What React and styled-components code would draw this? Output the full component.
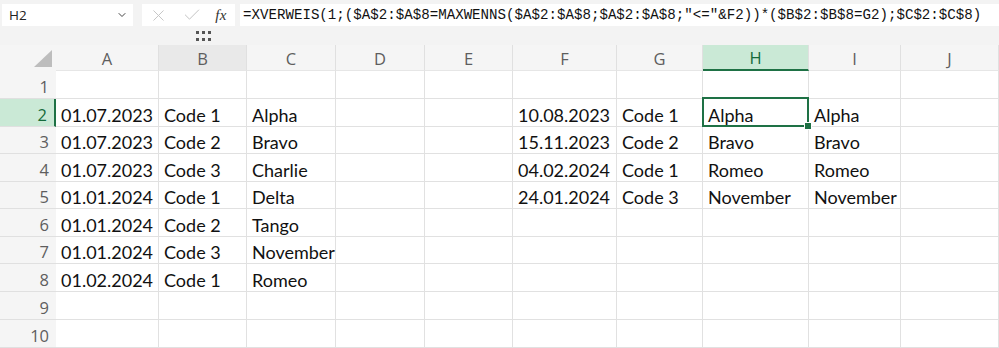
import styled, { createGlobalStyle } from "styled-components";
import { ChevronDown, X, Check } from "lucide-react";

const GlobalStyle = createGlobalStyle`
  body {
    margin: 0;
    background: #ffffff;
  }
`;

const COLS = ["A", "B", "C", "D", "E", "F", "G", "H", "I", "J"];
const ROW_HEIGHTS = [28, 28, 27, 28, 27, 28, 27, 28, 28, 28];

const DATA = {
  2: { A: "01.07.2023", B: "Code 1", C: "Alpha", F: "10.08.2023", G: "Code 1", H: "Alpha", I: "Alpha" },
  3: { A: "01.07.2023", B: "Code 2", C: "Bravo", F: "15.11.2023", G: "Code 2", H: "Bravo", I: "Bravo" },
  4: { A: "01.07.2023", B: "Code 3", C: "Charlie", F: "04.02.2024", G: "Code 1", H: "Romeo", I: "Romeo" },
  5: { A: "01.01.2024", B: "Code 1", C: "Delta", F: "24.01.2024", G: "Code 3", H: "November", I: "November" },
  6: { A: "01.01.2024", B: "Code 2", C: "Tango" },
  7: { A: "01.01.2024", B: "Code 3", C: "November" },
  8: { A: "01.02.2024", B: "Code 1", C: "Romeo" },
};

const FORMULA =
  '=XVERWEIS(1;($A$2:$A$8=MAXWENNS($A$2:$A$8;$A$2:$A$8;"<="&F2))*($B$2:$B$8=G2);$C$2:$C$8)';

function App() {
  return (
    <Page>
      <GlobalStyle />
      <TopBar>
        <NameBox>
          <span>H2</span>
          <ChevronDown size={12} color="#444" strokeWidth={2} />
        </NameBox>
        <FxBox>
          <X size={19} color="#c4c4c4" strokeWidth={1.2} />
          <Check size={20} color="#c4c4c4" strokeWidth={1.2} />
          <FxLabel>fx</FxLabel>
        </FxBox>
        <FormulaBox>{FORMULA}</FormulaBox>
      </TopBar>
      <GripRow>
        <svg width="15" height="10" viewBox="0 0 15 10">
          {[0, 6, 12].map((x) =>
            [0, 7].map((y) => (
              <rect key={x + "-" + y} x={x} y={y} width="3" height="3" fill="#555" />
            ))
          )}
        </svg>
      </GripRow>
      <Sheet>
        <Corner>
          <svg width="18" height="17" viewBox="0 0 18 17">
            <polygon points="18,0 18,17 0,17" fill="#bdbdbd" />
          </svg>
        </Corner>
        {COLS.map((c) => (
          <ColHead key={c} $active={c === "H"} $hover={c === "B"}>
            {c}
          </ColHead>
        ))}
        {ROW_HEIGHTS.map((h, i) => {
          const r = i + 1;
          return [
            <RowHead key={"h" + r} $active={r === 2}>
              {r}
            </RowHead>,
            ...COLS.map((c) => (
              <Cell key={c + r} $selected={r === 2 && c === "H"}>
                {DATA[r] && DATA[r][c]}
              </Cell>
            )),
          ];
        })}
      </Sheet>
    </Page>
  );
}

const Page = styled.div`
  width: 999px;
  height: 348px;
  overflow: hidden;
  display: flex;
  flex-direction: column;
  background: #f3f3f3;
`;

const TopBar = styled.div`
  display: flex;
  align-items: stretch;
  height: 24px;
  padding-top: 4px;
`;

const NameBox = styled.div`
  width: 131px;
  margin-left: 2px;
  background: #ffffff;
  display: flex;
  align-items: center;
  justify-content: space-between;
  padding: 0 5px 0 7px;
  box-sizing: border-box;
  font-family: "Open Sans", "Noto Sans", sans-serif;
  font-size: 13.5px;
  color: #222;
`;

const FxBox = styled.div`
  width: 93px;
  margin-left: 9px;
  background: #ffffff;
  display: flex;
  align-items: center;
  justify-content: space-between;
  padding: 0 8px 0 7px;
  box-sizing: border-box;
`;

const FxLabel = styled.span`
  font-family: "Liberation Serif", "DejaVu Serif", serif;
  font-style: italic;
  font-size: 15px;
  color: #333;
  letter-spacing: 0.5px;
`;

const FormulaBox = styled.div`
  flex: 1;
  margin-left: 5px;
  background: #ffffff;
  display: flex;
  align-items: center;
  padding-left: 3px;
  white-space: nowrap;
  overflow: hidden;
  font-family: "Liberation Mono", "DejaVu Sans Mono", monospace;
  font-size: 14.15px;
  color: #111;
`;

const GripRow = styled.div`
  height: 20px;
  display: flex;
  align-items: center;
  padding-left: 196px;
`;

const Sheet = styled.div`
  display: grid;
  grid-template-columns: 56px 103px 88px 89px 89px 88px 104px 86px 106px 92px 1fr;
  grid-template-rows: 26px ${ROW_HEIGHTS.map((h) => h + "px").join(" ")};
  background: #ffffff;
`;

const Corner = styled.div`
  background: #f5f5f5;
  display: flex;
  align-items: flex-end;
  justify-content: flex-end;
  padding: 0 4px 4px 0;
`;

const ColHead = styled.div`
  display: flex;
  align-items: center;
  justify-content: center;
  box-sizing: border-box;
  background: ${(p) => (p.$active ? "#cae9d6" : p.$hover ? "#e9e9e9" : "#f5f5f5")};
  border-right: 1px solid #e0e0e0;
  border-bottom: ${(p) => (p.$active ? "2px solid #1e7145" : "1px solid #e6e6e6")};
  color: ${(p) => (p.$active ? "#156b3b" : "#5e5e5e")};
  font-family: "Open Sans", "Noto Sans", sans-serif;
  font-size: 16.5px;
  padding-top: 1px;
`;

const RowHead = styled.div`
  display: flex;
  align-items: center;
  justify-content: flex-end;
  box-sizing: border-box;
  padding-right: 7px;
  background: ${(p) => (p.$active ? "#cae9d6" : "#f5f5f5")};
  border-bottom: 1px solid #e0e0e0;
  border-right: ${(p) => (p.$active ? "2px solid #1e7145" : "none")};
  color: ${(p) => (p.$active ? "#156b3b" : "#5e5e5e")};
  font-family: "Open Sans", "Noto Sans", sans-serif;
  font-size: 16.5px;
  padding-top: 3px;
`;

const Cell = styled.div`
  position: relative;
  display: flex;
  align-items: center;
  box-sizing: border-box;
  padding: 4px 0 0 5px;
  border-right: 1px solid #e1e1e1;
  border-bottom: 1px solid #e1e1e1;
  white-space: nowrap;
  font-family: Lato, "Open Sans", sans-serif;
  font-size: 18px;
  color: #111;

  ${(p) =>
    p.$selected &&
    `
    &::after {
      content: "";
      position: absolute;
      left: -1px;
      top: -2px;
      right: -1px;
      bottom: -1px;
      border: 2px solid #1e7145;
      pointer-events: none;
    }
    &::before {
      content: "";
      position: absolute;
      right: -4px;
      bottom: -4px;
      width: 6px;
      height: 6px;
      background: #1e7145;
      border: 1px solid #ffffff;
      z-index: 2;
    }
  `}
`;

export default App;
